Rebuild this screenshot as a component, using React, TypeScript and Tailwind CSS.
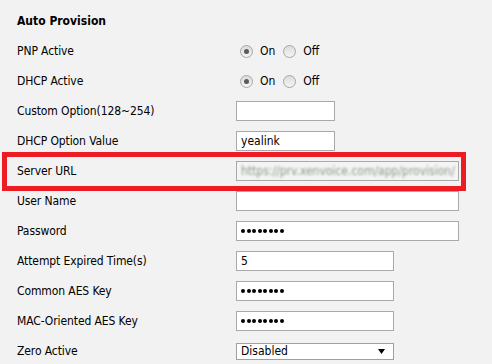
import React from 'react';

const font = { fontFamily: '"DejaVu Sans Condensed", "DejaVu Sans", sans-serif' };

const Radio = ({ checked }: { checked?: boolean }) => (
  <span className="flex items-center justify-center w-[13px] h-[13px] rounded-full border border-[#a6a6a6] bg-gradient-to-b from-[#dcdcdc] to-[#f4f4f4]">
    {checked && <span className="w-[5px] h-[5px] rounded-full bg-[#5a5a5a]" />}
  </span>
);

const Dots = () => (
  <div className="flex items-center gap-[1.5px]">
    {Array.from({ length: 8 }).map((_, i) => (
      <span key={i} className="w-[4px] h-[4px] rounded-full bg-black" />
    ))}
  </div>
);

const Field = ({ width, children, disabled }: { width: string; children?: React.ReactNode; disabled?: boolean }) => (
  <div
    className={`h-[20px] border border-[#a9a9a9] flex items-center pl-[4px] overflow-hidden ${width} ${
      disabled ? 'bg-[#f4f4f4]' : 'bg-white'
    }`}
  >
    {children}
  </div>
);

const Row = ({ label, children }: { label: string; children: React.ReactNode }) => (
  <div className="flex items-center h-[30px]">
    <div className="w-[219px] shrink-0 tracking-[-0.1px]">{label}</div>
    {children}
  </div>
);

const OnOff = () => (
  <div className="flex items-center pl-[4px]">
    <Radio checked />
    <span className="ml-[7px]">On</span>
    <span className="ml-[8px]">
      <Radio />
    </span>
    <span className="ml-[7px]">Off</span>
  </div>
);

export default function App() {
  return (
    <div className="w-[492px] h-[364px] bg-[#f2f2f2] text-black text-[12px] pt-[6px] pl-[17px] overflow-hidden" style={font}>
      <div className="h-[30px] flex items-center font-bold">Auto Provision</div>

      <Row label="PNP Active">
        <OnOff />
      </Row>
      <Row label="DHCP Active">
        <OnOff />
      </Row>
      <Row label="Custom Option(128~254)">
        <Field width="w-[99px]" />
      </Row>
      <Row label="DHCP Option Value">
        <Field width="w-[99px]">yealink</Field>
      </Row>

      <div className="relative">
        <Row label="Server URL">
          <Field width="w-[223px]" disabled>
            <span className="text-[#8a9a8a] blur-[1.3px] whitespace-nowrap">https://prv.xenvoice.com/app/provision/</span>
          </Field>
        </Row>
        <div className="absolute left-[-15px] top-[-4px] w-[464px] h-[39px] border-[5px] border-[#ed1c24] pointer-events-none" />
      </div>

      <Row label="User Name">
        <Field width="w-[223px]" />
      </Row>
      <Row label="Password">
        <Field width="w-[223px]">
          <Dots />
        </Field>
      </Row>
      <Row label="Attempt Expired Time(s)">
        <Field width="w-[158px]">5</Field>
      </Row>
      <Row label="Common AES Key">
        <Field width="w-[158px]">
          <Dots />
        </Field>
      </Row>
      <Row label="MAC-Oriented AES Key">
        <Field width="w-[158px]">
          <Dots />
        </Field>
      </Row>
      <Row label="Zero Active">
        <div className="w-[158px] h-[17px] border border-[#a0a0a0] bg-white flex items-center justify-between pl-[4px] pr-[8px]">
          <span>Disabled</span>
          <svg width="7" height="5" viewBox="0 0 7 5">
            <path d="M0 0 H7 L3.5 5 Z" fill="#000" />
          </svg>
        </div>
      </Row>
    </div>
  );
}
